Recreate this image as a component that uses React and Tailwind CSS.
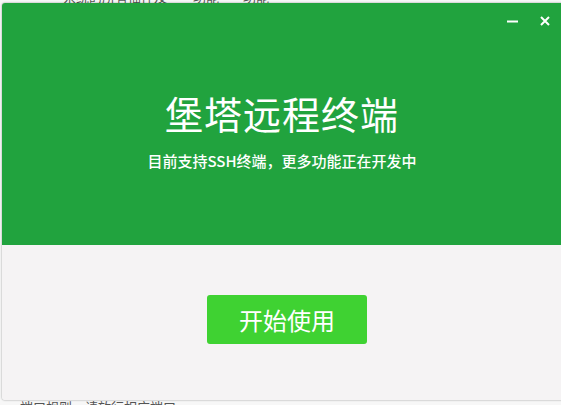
import React from "react";

export default function App() {
  return (
    <div className="relative h-[405px] w-[561px] overflow-hidden bg-[#f7f7f7] font-['Noto_Sans_CJK_SC','Noto_Sans',sans-serif]">
      {/* page content behind the dialog */}
      <div className="flex h-full flex-col justify-between">
        <div className="-mt-[10px] flex gap-[24px] pl-[63px] text-[13px] leading-[14px] text-[#555]">
          <span>系统的所有插件及一些功能</span>
          <span>功能</span>
        </div>
        <div className="-mb-[10px] pl-[20px] text-[13px] leading-[16px] text-[#555]">
          <span>端口规则，请放行相应端口</span>
        </div>
      </div>

      {/* dialog */}
      <div className="absolute left-[2px] top-[3px] flex h-[397px] w-[570px] flex-col overflow-hidden rounded-[3px] shadow-[0_0_2px_rgba(0,0,0,0.45)]">
        <div className="relative flex h-[242px] flex-col items-center bg-[#21a33e] pr-[10px] text-white">
          <div className="absolute right-[22px] top-[12px] flex items-center gap-[22px]">
            <svg width="11" height="12" viewBox="0 0 11 12">
              <line x1="0" y1="6.5" x2="11" y2="6.5" stroke="white" strokeWidth="2" />
            </svg>
            <svg width="10" height="10" viewBox="0 0 10 10">
              <path d="M1 1L9 9M9 1L1 9" stroke="white" strokeWidth="2" />
            </svg>
          </div>
          <div className="mt-[83px] text-[38px] leading-[54px] tracking-[1px]">堡塔远程终端</div>
          <div className="mt-[11px] text-[15px] font-medium leading-[20px]">目前支持SSH终端，更多功能正在开发中</div>
        </div>
        <div className="flex flex-1 items-center justify-center bg-[#f5f3f4] pb-[6px]">
          <button className="flex h-[49px] w-[160px] items-center justify-center rounded-[3px] bg-[#3fd232] text-[24px] text-white">
            开始使用
          </button>
        </div>
      </div>
    </div>
  );
}
